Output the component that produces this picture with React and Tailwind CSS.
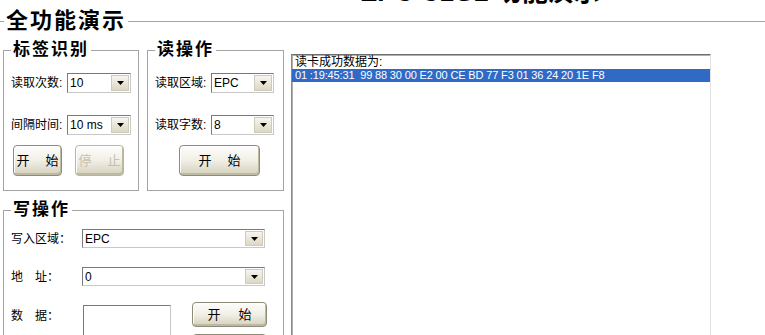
import React from 'react'

const Arrow = () => (
  <svg width="7" height="4" viewBox="0 0 7 4">
    <path d="M0 0 L7 0 L3.5 4 Z" fill="#000" />
  </svg>
)

const Combo = ({ value, className }) => (
  <div className={`flex shrink-0 bg-white border border-t-[#7a7a7a] border-l-[#7a7a7a] border-r-[#c8c8c8] border-b-[#c8c8c8] ${className}`}>
    <div className="flex-1 pl-[2px] text-[12px] leading-[16px] self-center truncate">{value}</div>
    <div className="w-[18px] m-[1px] flex items-center justify-center bg-gradient-to-b from-[#f7f5ee] to-[#dcd8c4] border border-[#cfcbb8]">
      <Arrow />
    </div>
  </div>
)

const XpButton = ({ children, disabled, className, gap }) => (
  <div
    className={`flex shrink-0 items-center justify-center rounded-[4px] border border-[#8e8b78] bg-gradient-to-b from-[#fdfdfb] via-[#f1efe6] to-[#d4d0bc] shadow-[inset_-1px_-2px_0_#bdb9a3,inset_1px_1px_0_#ffffff] text-[13px] ${gap} ${disabled ? 'text-[#c4c0ac] border-[#b8b5a4]' : 'text-black'} ${className}`}
  >
    {children}
  </div>
)

const Label = ({ children, className }) => (
  <span className={`shrink-0 whitespace-nowrap text-[12px] ${className}`}>{children}</span>
)

const Group = ({ title, className, children }) => (
  <fieldset className={`border border-[#a4a4a4] px-[7px] overflow-hidden ${className}`}>
    <legend className="px-[2px] text-[17px] font-bold leading-[20px] tracking-[2px]">{title}</legend>
    {children}
  </fieldset>
)

export default function App() {
  return (
    <div className="w-[765px] h-[335px] overflow-hidden bg-white text-black font-['Liberation_Sans','Noto_Sans_CJK_SC',sans-serif]">
      {/* clipped window caption */}
      <div className="h-[6px] overflow-hidden">
        <div className="pl-[360px] mt-[-23px] text-[26px] font-bold leading-[30px] whitespace-nowrap">EPC C1G2 功能演示</div>
      </div>

      <fieldset className="mt-[2px] ml-[-10px] w-[800px] h-[400px] border border-[#a4a4a4] pl-[12px] pt-[6px]">
        <legend className="ml-[1px] px-[2px] text-[22px] font-bold leading-[26px] tracking-[2px]">全功能演示</legend>

        <div className="flex items-start gap-[7px]">
          {/* left column */}
          <div className="flex flex-col w-[281px] shrink-0">
            <div className="flex gap-[8px]">
              <Group title="标签识别" className="w-[136px] h-[151px]">
                <div className="flex items-center mt-[13px]">
                  <Label className="w-[56px]">读取次数:</Label>
                  <Combo value="10" className="w-[64px] h-[20px]" />
                </div>
                <div className="flex items-center mt-[22px]">
                  <Label className="w-[56px]">间隔时间:</Label>
                  <Combo value="10 ms" className="w-[64px] h-[20px]" />
                </div>
                <div className="flex mt-[10px] ml-[2px] gap-[13px]">
                  <XpButton className="w-[49px] h-[31px]" gap="gap-[16px]">
                    <span>开</span><span>始</span>
                  </XpButton>
                  <XpButton disabled className="w-[49px] h-[31px]" gap="gap-[16px]">
                    <span>停</span><span>止</span>
                  </XpButton>
                </div>
              </Group>

              <Group title="读操作" className="w-[137px] h-[151px]">
                <div className="flex items-center mt-[13px]">
                  <Label className="w-[56px]">读取区域:</Label>
                  <Combo value="EPC" className="w-[63px] h-[20px]" />
                </div>
                <div className="flex items-center mt-[22px]">
                  <Label className="w-[56px]">读取字数:</Label>
                  <Combo value="8" className="w-[63px] h-[20px]" />
                </div>
                <div className="flex mt-[10px] ml-[24px]">
                  <XpButton className="w-[81px] h-[31px]" gap="gap-[16px]">
                    <span>开</span><span>始</span>
                  </XpButton>
                </div>
              </Group>
            </div>

            <Group title="写操作" className="mt-[9px] w-[281px] h-[200px]">
              <div className="flex items-center mt-[9px]">
                <Label className="w-[71px]">写入区域：</Label>
                <Combo value="EPC" className="w-[183px] h-[19px]" />
              </div>
              <div className="flex items-center mt-[19px]">
                <Label className="w-[71px]">地　址：</Label>
                <Combo value="0" className="w-[183px] h-[19px]" />
              </div>
              <div className="flex items-start mt-[19px]">
                <Label className="w-[72px] leading-[20px] mt-[1px]">数　据：</Label>
                <div className="shrink-0 w-[88px] h-[60px] bg-white border border-t-[#7a7a7a] border-l-[#7a7a7a] border-r-[#c8c8c8] border-b-[#c8c8c8]" />
                <div className="flex flex-col gap-[7px] ml-[21px] mt-[-3px]">
                  <XpButton className="w-[75px] h-[25px]" gap="gap-[18px]">
                    <span>开</span><span>始</span>
                  </XpButton>
                  <XpButton className="w-[75px] h-[25px]" gap="gap-[18px]" />
                </div>
              </div>
            </Group>
          </div>

          {/* result list */}
          <div className="mt-[14px] w-[420px] h-[300px] shrink-0 bg-white border border-t-[#6e6e6e] border-l-[#8a8a8a] border-r-[#e2e2e2] border-b-[#e2e2e2] shadow-[inset_1px_1px_0_#b0b0b0]">
            <div className="pl-[3px] text-[12px] leading-[14px]">读卡成功数据为:</div>
            <div className="h-[13px] bg-[#316ac5] text-white pl-[3px] text-[11px] leading-[13px] tracking-[-0.15px] whitespace-nowrap">
              01 :19:45:31&nbsp;&nbsp;99 88 30 00 E2 00 CE BD 77 F3 01 36 24 20 1E F8
            </div>
          </div>
        </div>
      </fieldset>
    </div>
  )
}
